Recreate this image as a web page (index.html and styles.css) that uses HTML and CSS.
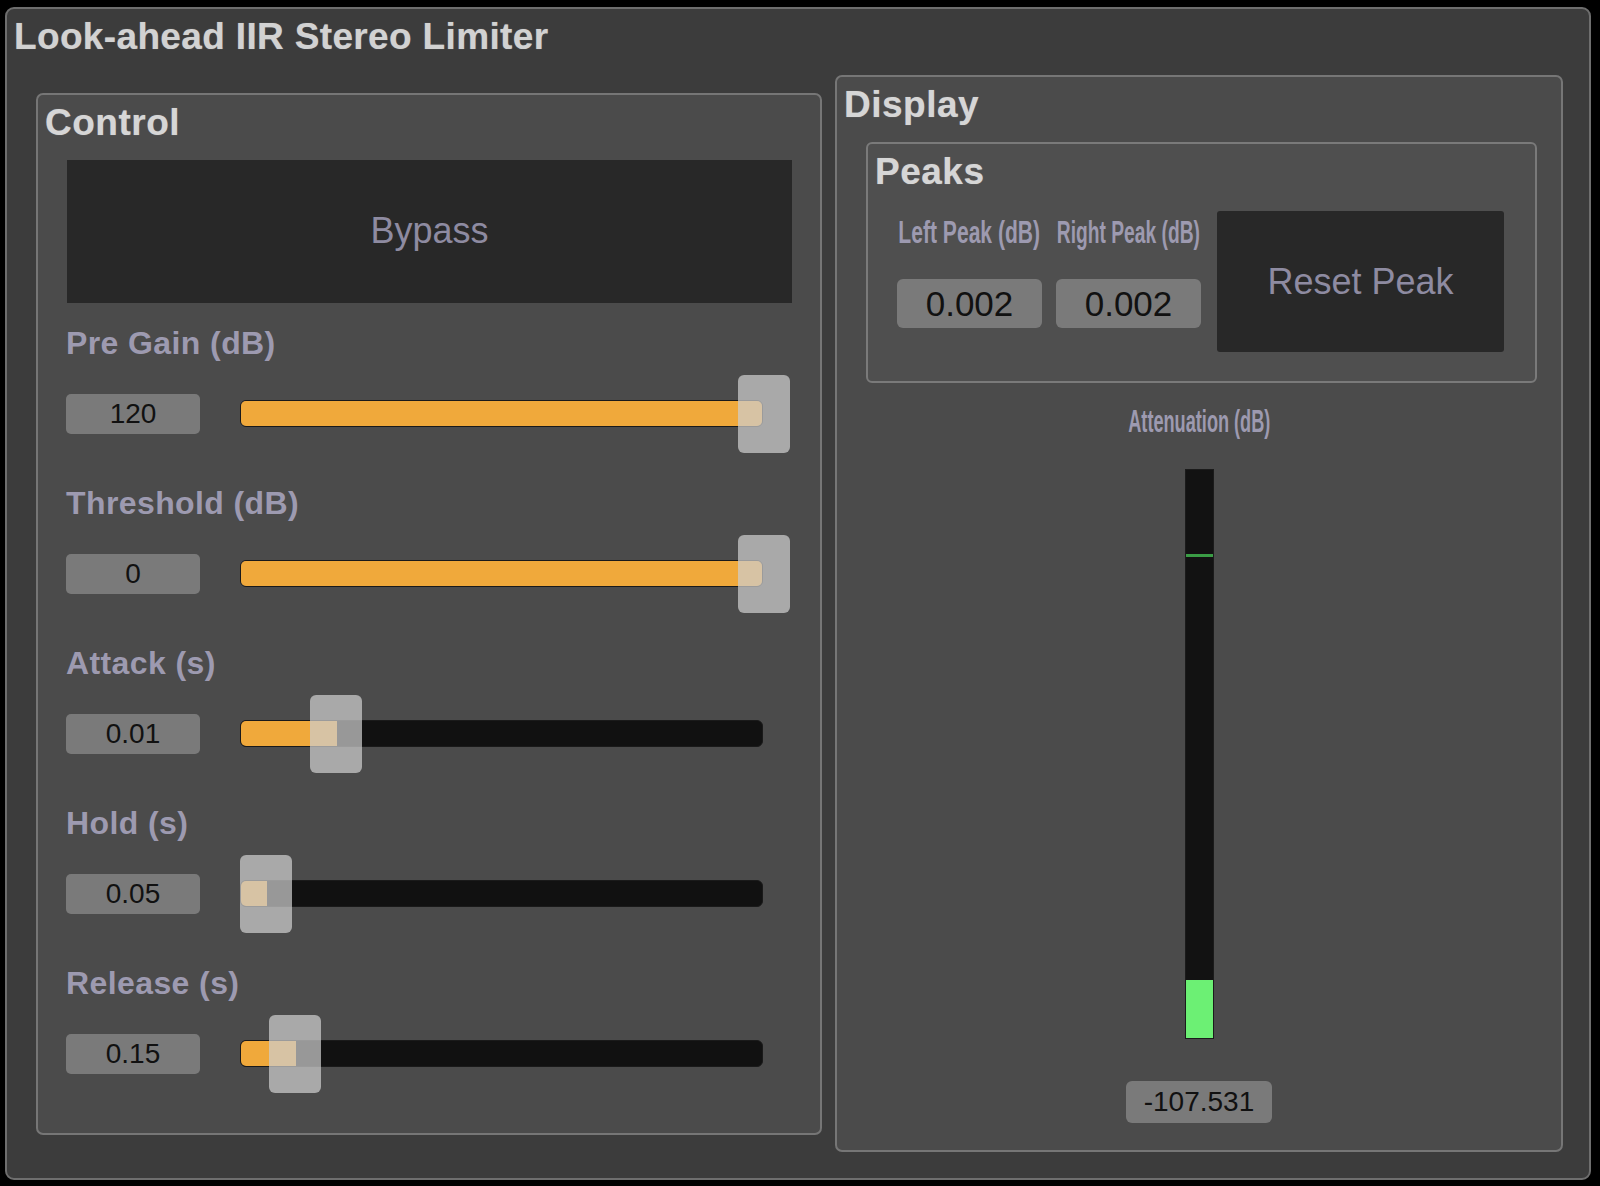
FILE: index.html
```html
<!DOCTYPE html>
<html>
<head>
<meta charset="utf-8">
<title>Look-ahead IIR Stereo Limiter</title>
<link rel="stylesheet" href="styles.css">
</head>
<body>
<div class="main">
  <h1 class="title">Look-ahead IIR Stereo Limiter</h1>
  <div class="cols">
    <section class="group control">
      <h2 class="group-title">Control</h2>
      <div class="big-btn bypass">Bypass</div>

      <div class="param">
        <div class="param-label">Pre Gain (dB)</div>
        <div class="param-row">
          <div class="num">120</div>
          <div class="slider">
            <div class="track"><div class="fill" style="width:523px"></div></div>
            <div class="thumb" style="left:498px"></div>
          </div>
        </div>
      </div>

      <div class="param">
        <div class="param-label">Threshold (dB)</div>
        <div class="param-row">
          <div class="num">0</div>
          <div class="slider">
            <div class="track"><div class="fill" style="width:523px"></div></div>
            <div class="thumb" style="left:498px"></div>
          </div>
        </div>
      </div>

      <div class="param">
        <div class="param-label">Attack (s)</div>
        <div class="param-row">
          <div class="num">0.01</div>
          <div class="slider">
            <div class="track"><div class="fill" style="width:96px"></div></div>
            <div class="thumb" style="left:70px"></div>
          </div>
        </div>
      </div>

      <div class="param">
        <div class="param-label">Hold (s)</div>
        <div class="param-row">
          <div class="num">0.05</div>
          <div class="slider">
            <div class="track"><div class="fill" style="width:26px"></div></div>
            <div class="thumb" style="left:0px"></div>
          </div>
        </div>
      </div>

      <div class="param">
        <div class="param-label">Release (s)</div>
        <div class="param-row">
          <div class="num">0.15</div>
          <div class="slider">
            <div class="track"><div class="fill" style="width:55px"></div></div>
            <div class="thumb" style="left:29px"></div>
          </div>
        </div>
      </div>
    </section>

    <section class="group display">
      <h2 class="group-title">Display</h2>
      <div class="group peaks">
        <h2 class="group-title">Peaks</h2>
        <div class="peaks-row">
          <div class="peak-col">
            <div class="peak-label"><span class="sq sq-left">Left Peak (dB)</span></div>
            <div class="num num-lg">0.002</div>
          </div>
          <div class="peak-col peak-col-right">
            <div class="peak-label"><span class="sq sq-right">Right Peak (dB)</span></div>
            <div class="num num-lg">0.002</div>
          </div>
          <div class="big-btn reset">Reset Peak</div>
        </div>
      </div>
      <div class="atten-label"><span class="sq sq-att">Attenuation (dB)</span></div>
      <div class="meter">
        <div class="meter-peak" style="top:84px"></div>
        <div class="meter-fill" style="height:58px"></div>
      </div>
      <div class="num num-meter">-107.531</div>
    </section>
  </div>
</div>
</body>
</html>
```

FILE: styles.css
```css
* { box-sizing: border-box; }

html, body {
  margin: 0;
  padding: 0;
  background: #000;
}

body {
  width: 1600px;
  height: 1186px;
  overflow: hidden;
  font-family: "Liberation Sans", Arial, Helvetica, sans-serif;
}

.main {
  margin: 7px 0 0 5px;
  width: 1586px;
  height: 1173px;
  background: #3c3c3c;
  border: 2px solid #6e6e6e;
  border-radius: 9px;
  display: flex;
  flex-direction: column;
}

.title {
  margin: 8px 0 0 0;
  padding-left: 7px;
  height: 40px;
  font-size: 37px;
  line-height: 40px;
  font-weight: 700;
  letter-spacing: 0.35px;
  color: #d2d2d2;
  text-shadow: 0 0 1px rgba(210, 210, 210, 0.5);
  white-space: nowrap;
}

.cols {
  flex: 1;
  display: flex;
  align-items: center;
  gap: 13px;
  padding: 0 0 8px 29px;
}

.group {
  background: #4b4b4b;
  border: 2px solid #767676;
  border-radius: 7px;
  display: flex;
  flex-direction: column;
}

.group-title {
  margin: 0;
  padding-left: 7px;
  height: 40px;
  font-size: 37px;
  line-height: 40px;
  font-weight: 700;
  letter-spacing: 0.5px;
  color: #d6d6d6;
  text-shadow: 0 0 1px rgba(214, 214, 214, 0.5);
  white-space: nowrap;
}

/* Control column */
.control {
  width: 786px;
  height: 1042px;
  padding-top: 8px;
}

.big-btn {
  background: #282828;
  color: #8e8ba1;
  font-size: 36px;
  display: flex;
  align-items: center;
  justify-content: center;
  white-space: nowrap;
}

.bypass {
  margin: 17px 0 0 29px;
  width: 725px;
  height: 143px;
}

.param {
  margin: 29px 0 0 28px;
  width: 726px;
}

.bypass + .param {
  margin-top: 20px;
}

.param-label {
  height: 40px;
  font-size: 32px;
  line-height: 40px;
  font-weight: 700;
  letter-spacing: 0.4px;
  color: #9d9ab0;
  white-space: nowrap;
}

.param-row {
  margin-top: 11px;
  height: 80px;
  display: flex;
  align-items: center;
}

.num {
  width: 134px;
  height: 40px;
  background: #7a7a7a;
  border-radius: 5px;
  font-size: 28px;
  line-height: 40px;
  text-align: center;
  color: #111;
  white-space: nowrap;
}

.slider {
  position: relative;
  margin-left: 40px;
  width: 550px;
  height: 80px;
  display: flex;
  align-items: center;
}

.track {
  width: 523px;
  height: 27px;
  background: #111;
  border: 1px solid #1a1a1a;
  border-radius: 6px;
  overflow: hidden;
}

.fill {
  height: 100%;
  background: #f0a93b;
}

.thumb {
  position: absolute;
  top: 1px;
  width: 52px;
  height: 78px;
  background: rgba(205, 205, 205, 0.72);
  border-radius: 6px;
}

/* Display column */
.display {
  width: 728px;
  height: 1077px;
  padding-top: 8px;
  align-items: center;
}

.display > .group-title {
  align-self: stretch;
}

.peaks {
  align-self: flex-start;
  margin: 17px 0 0 29px;
  width: 671px;
  height: 241px;
  padding-top: 8px;
  background: #4f4f4f;
  border-color: #7a7a7a;
  border-radius: 6px;
}

.peaks-row {
  margin: 19px 0 0 29px;
  display: flex;
  align-items: flex-start;
}

.peak-col {
  width: 145px;
  display: flex;
  flex-direction: column;
}

.peak-col-right {
  margin-left: 14px;
}

.peak-label,
.atten-label {
  height: 44px;
  display: flex;
  justify-content: center;
  font-size: 31px;
  line-height: 44px;
  font-weight: 700;
  color: #9d9ab0;
  white-space: nowrap;
}

.sq {
  display: inline-block;
  transform-origin: center;
}

.sq-left { transform: scaleX(0.68); }
.sq-right { transform: scaleX(0.62); }
.sq-att { transform: scaleX(0.567); }

.num-lg {
  margin-top: 24px;
  width: 145px;
  height: 49px;
  font-size: 35px;
  line-height: 49px;
  border-radius: 6px;
}

.reset {
  margin-left: 16px;
  width: 287px;
  height: 141px;
  border-radius: 3px;
}

.atten-label {
  margin-top: 18px;
  width: 200px;
  height: 40px;
  font-size: 32px;
  line-height: 40px;
}

.meter {
  position: relative;
  margin-top: 28px;
  width: 29px;
  height: 570px;
  background: #121212;
  border: 1px solid #1b1b1b;
  display: flex;
  flex-direction: column;
  justify-content: flex-end;
}

.meter-peak {
  position: absolute;
  left: 0;
  right: 0;
  height: 3px;
  background: #3a9c45;
}

.meter-fill {
  background: #6cf074;
}

.num-meter {
  margin-top: 42px;
  width: 146px;
  height: 42px;
  font-size: 28px;
  line-height: 42px;
  border-radius: 6px;
}
```
